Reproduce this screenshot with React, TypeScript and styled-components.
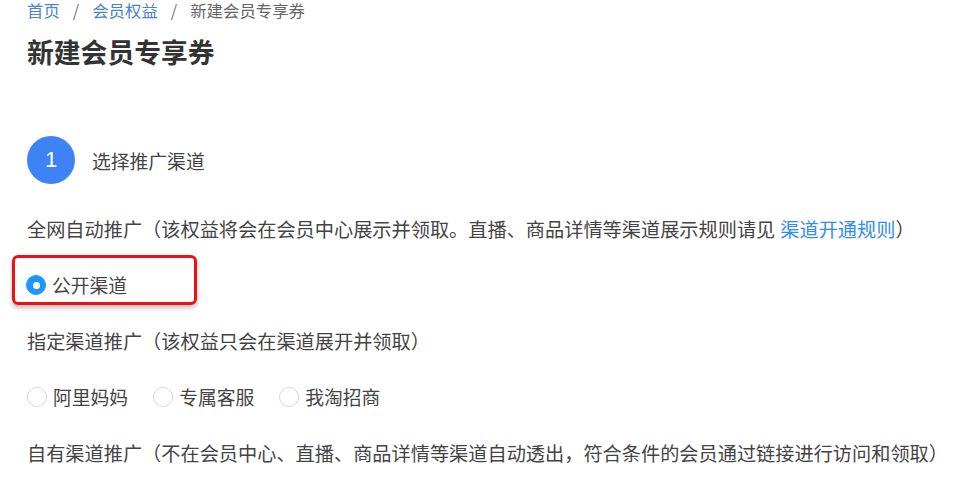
import styled, { createGlobalStyle } from 'styled-components'

const GlobalStyle = createGlobalStyle`
  html, body {
    margin: 0;
    padding: 0;
    background: #fff;
  }
  body {
    font-family: "Noto Sans CJK SC", "Noto Sans", sans-serif;
    color: #444;
  }
`

const Page = styled.div`
  padding: 0 0 0 27px;
  display: flex;
  flex-direction: column;
`

const Breadcrumb = styled.nav`
  display: flex;
  align-items: center;
  gap: 13px;
  font-size: 16.4px;
  line-height: 20px;
  color: #666;
`

const Crumb = styled.a`
  color: #4a84cf;
  text-decoration: none;
`

const Sep = styled.span`
  color: #777;
`

const Title = styled.h1`
  margin: 14px 0 0;
  font-size: 26.8px;
  line-height: 36px;
  font-weight: 600;
  color: #333;
`

const Step = styled.div`
  display: flex;
  align-items: center;
  gap: 17px;
  margin-top: 66px;
`

const StepNum = styled.div`
  width: 48px;
  height: 48px;
  border-radius: 50%;
  background: #3f82f4;
  color: #fff;
  display: flex;
  align-items: center;
  justify-content: center;
  font-family: "Liberation Sans", Arial, sans-serif;
  font-size: 22px;
`

const StepLabel = styled.span`
  font-size: 18.8px;
  color: #444;
`

const Line = styled.p<{ $top: number }>`
  margin: ${({ $top }) => $top}px 0 0;
  font-size: 19.2px;
  line-height: 28px;
  color: #444;
  white-space: nowrap;
`

const Link = styled.a`
  color: #2f8df2;
  text-decoration: none;
  margin-left: 5px;
`

const Highlight = styled.div`
  box-sizing: border-box;
  margin: 12px 0 0 -15px;
  width: 185px;
  height: 50px;
  padding: 13px 0 0 11px;
  border: 3px solid #ee1111;
  border-radius: 6px;
  box-shadow: 0 3px 4px rgba(0, 0, 0, 0.25);
`

const RadioGroup = styled.div<{ $top: number }>`
  display: flex;
  align-items: center;
  gap: 25px;
  margin-top: ${({ $top }) => $top}px;
`

const Option = styled.label`
  display: flex;
  align-items: center;
  gap: 6px;
  font-size: 18.8px;
  line-height: 28px;
  color: #444;
`

const Dot = styled.span<{ $checked?: boolean }>`
  box-sizing: border-box;
  width: 20px;
  height: 20px;
  border-radius: 50%;
  display: inline-flex;
  align-items: center;
  justify-content: center;
  background: ${({ $checked }) => ($checked ? '#1e96ff' : '#fff')};
  border: 1px solid ${({ $checked }) => ($checked ? '#1e96ff' : '#d9d9d9')};
  &::after {
    content: '';
    width: 7px;
    height: 7px;
    border-radius: 50%;
    background: #fff;
    display: ${({ $checked }) => ($checked ? 'block' : 'none')};
  }
`

export default function App() {
  return (
    <>
      <GlobalStyle />
      <Page>
        <Breadcrumb>
          <Crumb href="#">首页</Crumb>
          <Sep>/</Sep>
          <Crumb href="#">会员权益</Crumb>
          <Sep>/</Sep>
          <span>新建会员专享券</span>
        </Breadcrumb>
        <Title>新建会员专享券</Title>

        <Step>
          <StepNum>1</StepNum>
          <StepLabel>选择推广渠道</StepLabel>
        </Step>

        <Line $top={31}>
          全网自动推广（该权益将会在会员中心展示并领取。直播、商品详情等渠道展示规则请见
          <Link href="#">渠道开通规则</Link>）
        </Line>
        <Highlight>
          <Option>
            <Dot $checked />
            公开渠道
          </Option>
        </Highlight>

        <Line $top={22}>指定渠道推广（该权益只会在渠道展开并领取）</Line>
        <RadioGroup $top={28}>
          <Option>
            <Dot />
            阿里妈妈
          </Option>
          <Option>
            <Dot />
            专属客服
          </Option>
          <Option>
            <Dot />
            我淘招商
          </Option>
        </RadioGroup>

        <Line $top={28}>
          自有渠道推广（不在会员中心、直播、商品详情等渠道自动透出，符合条件的会员通过链接进行访问和领取）
        </Line>
      </Page>
    </>
  )
}
